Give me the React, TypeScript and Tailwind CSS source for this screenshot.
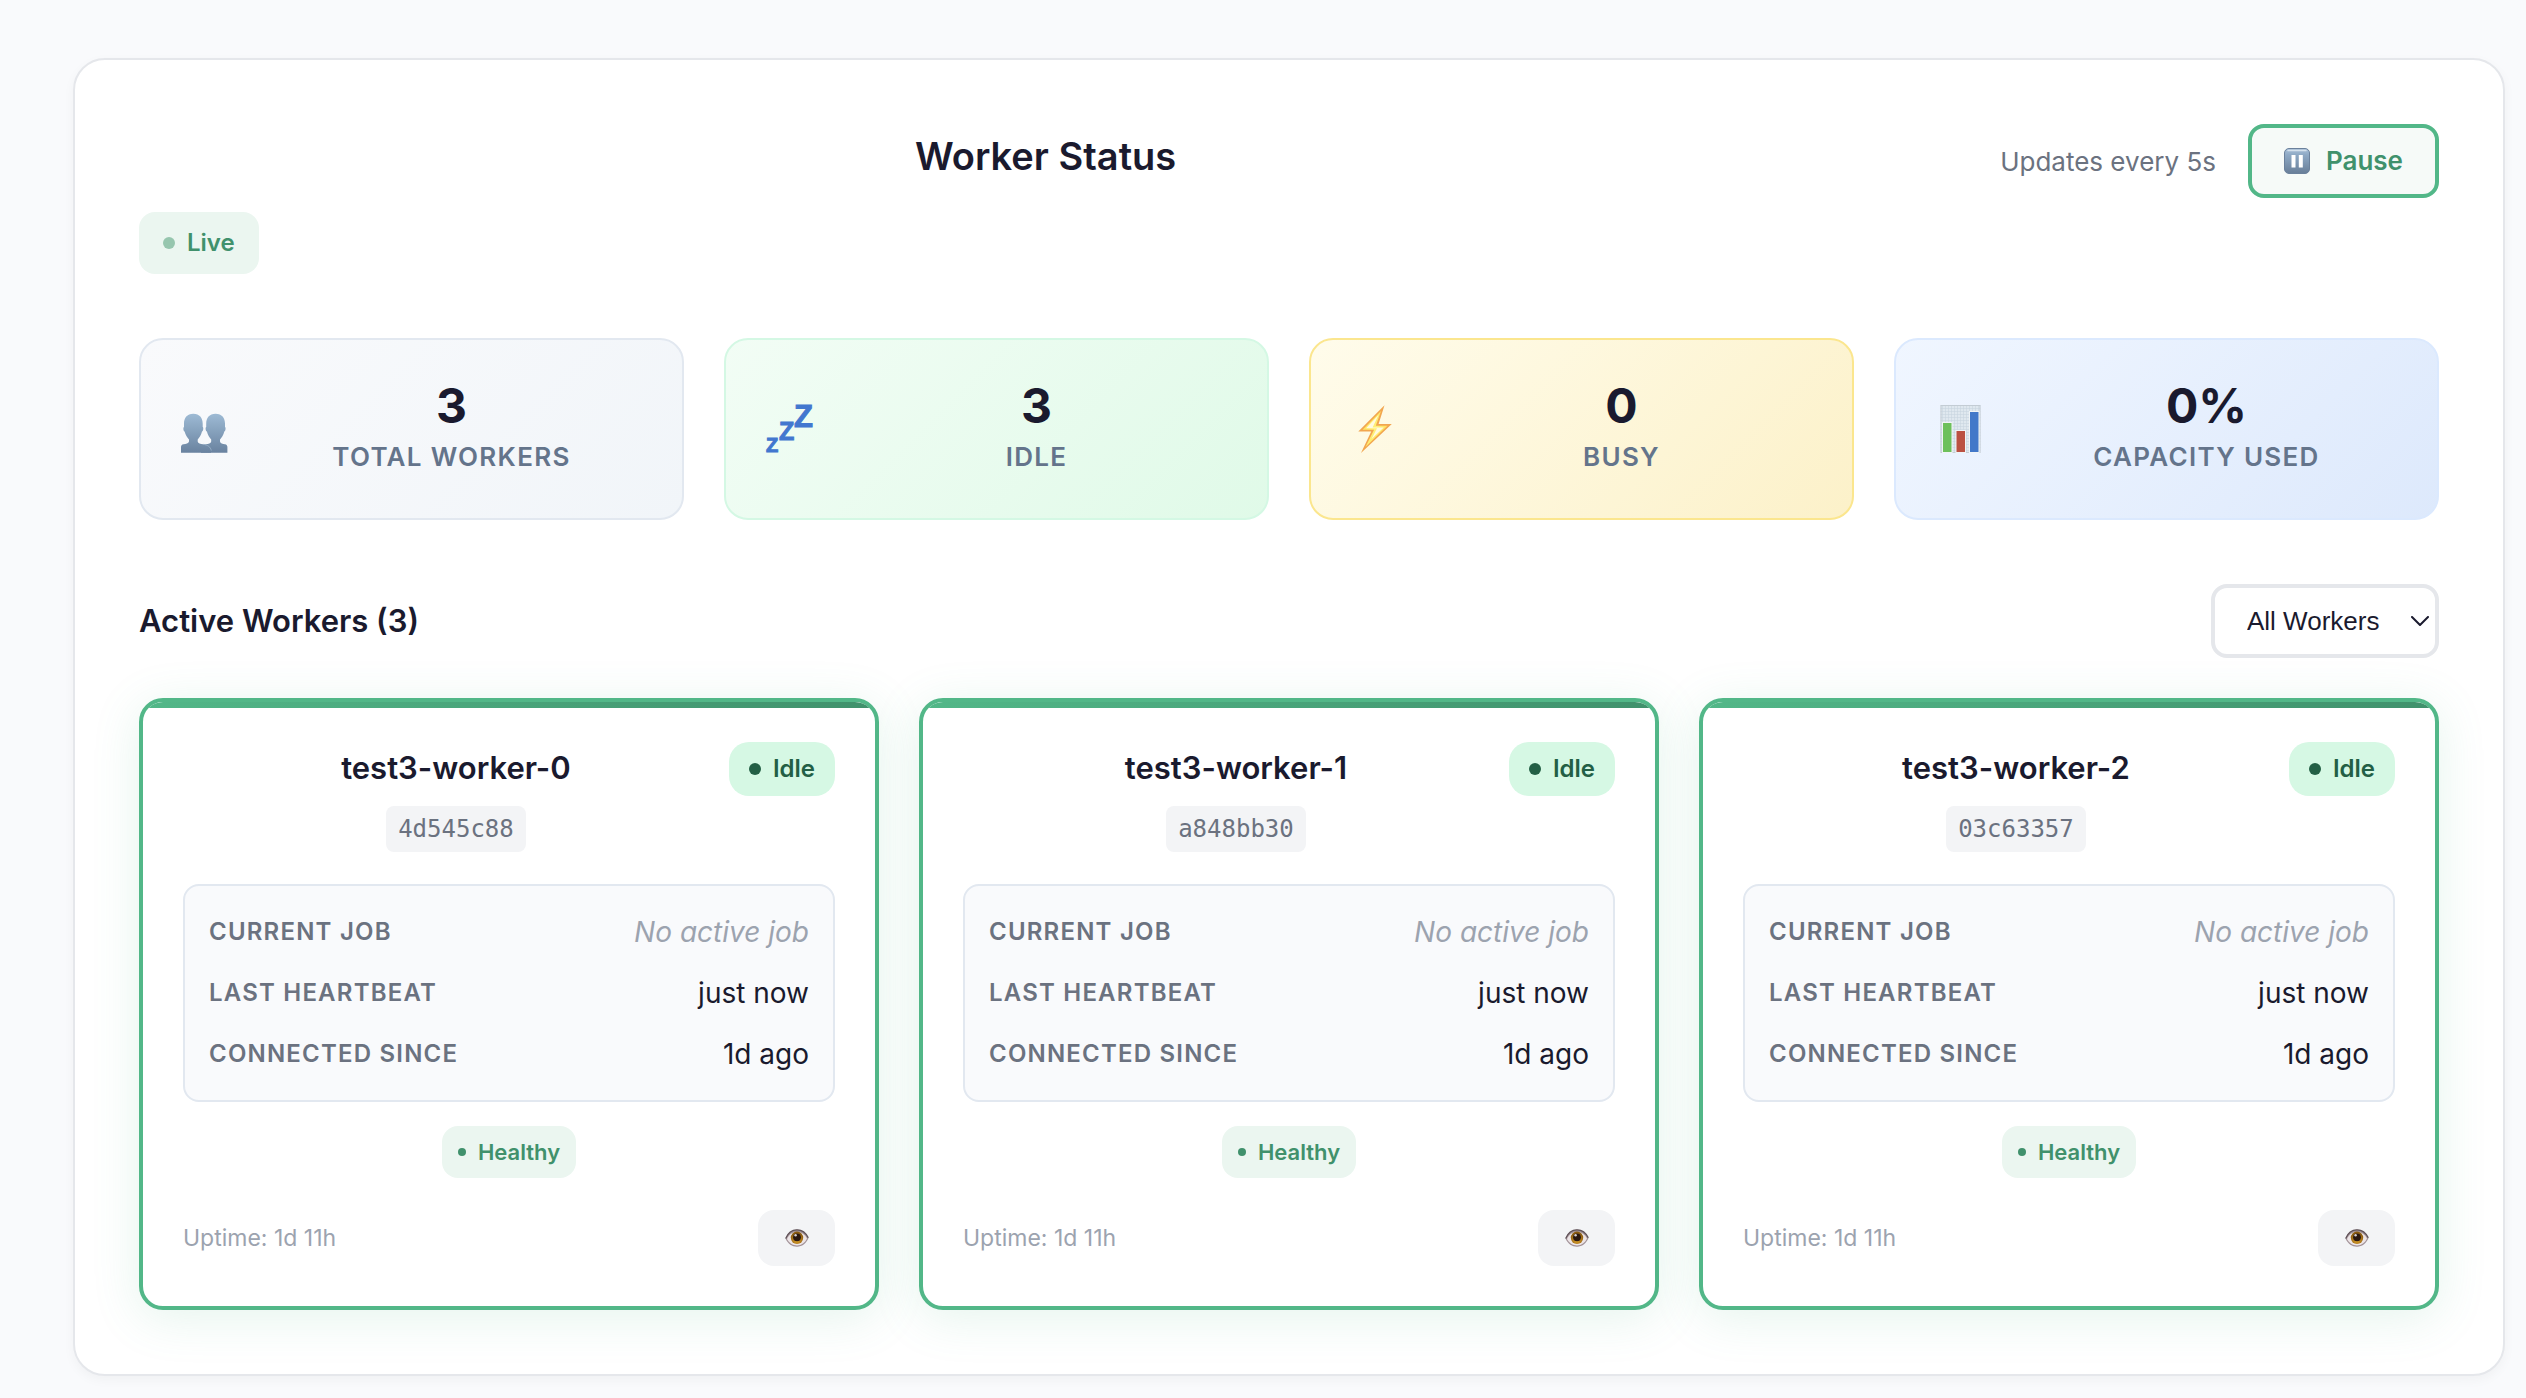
import { useState } from "react";

type Worker = { name: string; id: string };

const workers: Worker[] = [
  { name: "test3-worker-0", id: "4d545c88" },
  { name: "test3-worker-1", id: "a848bb30" },
  { name: "test3-worker-2", id: "03c63357" },
];

function PeopleIcon() {
  return (
    <svg viewBox="0 0 48 48" className="size-12 shrink-0" aria-hidden="true">
      <defs>
        <linearGradient id="people" x1="0" y1="9" x2="0" y2="48" gradientUnits="userSpaceOnUse">
          <stop offset="0" stopColor="#9dbad4" />
          <stop offset="1" stopColor="#69829f" />
        </linearGradient>
      </defs>
      <g fill="url(#people)">
        <path d="M34.600 8.700C28.300 8.700 25.200 13 25.200 18.500V22C24.200 22.500 24.500 26 25.900 26.500C26.700 30 28.700 33 30.200 34.500V36.500C29.900 38.500 27.400 39 24.900 39.300C22 39.600 20 41 20 43V47.700H46.400V42C46.400 40.500 45.600 39.600 44 39.300C41.700 39 39.300 38.500 39 36.500V34.500C40.500 33 42.500 30 43.300 26.500C44.700 26 45 22.500 44 22V18.500C44 13 40.900 8.700 34.600 8.700Z" />
        <path d="M12.300 8.700C6 8.700 3 13 3 18.500V22C2 22.500 2.300 26 3.600 26.500C4.500 30 6.500 33 8 34.500V36.500C7.500 38.500 5 39 2.500 39.300C.8 39.600 0 40.500 0 42V47.700H30C30 43 27 40 22 39.300C19.500 39 17 38.500 16.700 36.500V34.500C18.200 33 20.200 30 21 26.500C22.400 26 22.700 22.500 21.700 22V18.500C21.700 13 18.600 8.700 12.300 8.700Z" />
      </g>
      <path d="M22 39.300C27 40 29.500 42 30.300 45.500" fill="none" stroke="#9db5cb" strokeWidth=".8" />
    </svg>
  );
}

function SleepIcon() {
  return (
    <svg
      viewBox="0 0 48 48"
      className="size-12 shrink-0 overflow-visible font-['Liberation_Sans',sans-serif] font-bold"
      fill="#4277cf"
      stroke="#4277cf"
      strokeWidth="1"
      aria-hidden="true"
    >
      <text x="0" y="47" fontSize="20">Z</text>
      <text x="13" y="35" fontSize="25">Z</text>
      <text x="28" y="22" fontSize="31">Z</text>
    </svg>
  );
}

function BoltIcon() {
  return (
    <svg viewBox="0 0 48 48" className="size-12 shrink-0" aria-hidden="true">
      <defs>
        <linearGradient id="bolt" x1="0" y1="0" x2="1" y2="1">
          <stop offset="0" stopColor="#ffd23c" />
          <stop offset=".5" stopColor="#fff27a" />
          <stop offset="1" stopColor="#ffc53a" />
        </linearGradient>
      </defs>
      <path d="M33.500.3 7.300 26.400h12.900L10 48l30.800-28.900H27.600z" fill="#f2a64f" />
      <path d="M30 6 11.500 24.800h11.600L14.500 42l22-21.300H24.800z" fill="url(#bolt)" />
      <path d="M27.500 10 15 23.200h11L20.500 34l12.300-11.600H21.600z" fill="#fffbe0" />
    </svg>
  );
}

function ChartIcon() {
  return (
    <svg viewBox="0 0 48 48" className="size-12 shrink-0" aria-hidden="true">
      <defs>
        <pattern id="paper" width="3" height="3" patternUnits="userSpaceOnUse">
          <rect width="3" height="3" fill="#dfe8ef" />
          <path d="M0 0H3M0 0V3" stroke="#c6d3de" strokeWidth="1" />
        </pattern>
      </defs>
      <rect x="4.500" y="0" width="40" height="48" fill="url(#paper)" />
      <rect x="5" y=".5" width="39" height="47" fill="none" stroke="#c3ccd4" />
      <rect x="6.500" y="17.500" width="9.500" height="30" fill="#6dc05b" stroke="#f0f4f6" />
      <rect x="20" y="25.500" width="9.500" height="22" fill="#bb5142" stroke="#f0f4f6" />
      <rect x="33.500" y="6.500" width="9.500" height="41" fill="#4278c9" stroke="#f0f4f6" />
    </svg>
  );
}

function PauseIcon() {
  return (
    <svg viewBox="0 0 26 26" className="size-[26px] shrink-0" aria-hidden="true">
      <defs>
        <linearGradient id="pause" x1="0" y1="0" x2="0" y2="1">
          <stop offset="0" stopColor="#a9c0d8" />
          <stop offset=".25" stopColor="#8ea9c5" />
          <stop offset="1" stopColor="#687e98" />
        </linearGradient>
      </defs>
      <rect x=".5" y=".5" width="25" height="25" rx="4.500" fill="url(#pause)" stroke="#6b819c" />
      <path d="M4 2.500h18" stroke="#d3e0ec" strokeWidth="1.500" strokeLinecap="round" />
      <path d="M7.500 7h4v12.500h-4zM14.800 7h4v12.500h-4z" fill="#fff" />
    </svg>
  );
}

function EyeIcon() {
  return (
    <svg viewBox="0 0 24 20" className="h-5 w-6" aria-hidden="true">
      <defs>
        <radialGradient id="iris" cx=".5" cy=".7" r=".6">
          <stop offset="0" stopColor="#e0a52a" />
          <stop offset="1" stopColor="#8a5a10" />
        </radialGradient>
      </defs>
      <path
        d="M.5 10.500C3 4.500 7 1.500 12 1.500s9 3.300 11.500 8.500C21 15.500 17 18.700 12 18.700S3 16 .5 10.500z"
        fill="#a09096"
      />
      <path d="M2 11C4 6.300 7.500 4 12 4s8 2.500 10 6.500c-2 4.300-5.500 6.900-10 6.900S4.200 15 2 11z" fill="#ece4e6" />
      <path d="M.7 10.400C3 4.600 7 1.800 12 1.800s9 3 11.300 8" fill="none" stroke="#5f5258" strokeWidth="1.300" />
      <circle cx="12" cy="9.800" r="6.200" fill="url(#iris)" />
      <circle cx="12" cy="9.300" r="3.900" fill="#2a1710" />
      <circle cx="10.600" cy="7.300" r="1.200" fill="#d8cfd0" />
    </svg>
  );
}

const stats = [
  {
    value: "3",
    label: "Total Workers",
    Icon: PeopleIcon,
    tone: "border-[#e2e8f0] from-[#f9fafc] to-[#f1f5f9]",
  },
  {
    value: "3",
    label: "Idle",
    Icon: SleepIcon,
    tone: "border-[#d4f8e4] from-[#f2fdf5] to-[#e0fae8]",
  },
  {
    value: "0",
    label: "Busy",
    Icon: BoltIcon,
    tone: "border-[#fbe68e] from-[#fffceb] to-[#fcf1c9]",
  },
  {
    value: "0%",
    label: "Capacity Used",
    Icon: ChartIcon,
    tone: "border-[#dbe9fe] from-[#f0f6ff] to-[#dde9fc]",
  },
];

const details = [
  { label: "Current Job", value: "No active job", tone: "italic text-[#9ca3af]" },
  { label: "Last Heartbeat", value: "just now", tone: "text-[#1a1a2e]" },
  { label: "Connected Since", value: "1d ago", tone: "text-[#1a1a2e]" },
];

function WorkerCard({ worker }: { worker: Worker }) {
  return (
    <article className="relative overflow-hidden rounded-3xl border-4 border-[#52b788] bg-white p-10 shadow-[0_8px_48px_rgba(82,183,136,0.15)]">
      <div className="absolute inset-x-0 top-0 h-1.5 bg-linear-to-r from-[#52b788] to-[#40916c]" />
      <header className="flex items-start">
        <div className="flex flex-1 flex-col items-center">
          <h3 className="text-[31px] leading-[52px] font-semibold">{worker.name}</h3>
          <code className="mt-3 rounded-lg bg-[#f3f4f6] px-3 py-1 font-['DejaVu_Sans_Mono',monospace] text-2xl leading-[38px] text-[#6b7280]">
            {worker.id}
          </code>
        </div>
        <span className="flex items-center gap-3 rounded-[20px] bg-[#d6f8e4] px-5 py-2 text-2xl leading-[38px] font-semibold text-[#235f45]">
          <span className="size-3 rounded-full bg-current" />
          Idle
        </span>
      </header>
      <dl className="mt-8 flex flex-col gap-[17px] rounded-2xl border-2 border-[#e2e8f0] bg-[#f9fafc] p-6">
        {details.map((d) => (
          <div key={d.label} className="flex items-center justify-between">
            <dt className="text-2xl leading-[44px] font-semibold tracking-wider text-[#6b7280] uppercase">
              {d.label}
            </dt>
            <dd className={`text-[28px] leading-[44px] ${d.tone}`}>{d.value}</dd>
          </div>
        ))}
      </dl>
      <div className="mt-6 flex justify-center">
        <span className="flex items-center gap-3 rounded-2xl bg-[#ebf6f0] px-4 py-2 text-[22px] leading-9 font-semibold text-[#40916c]">
          <span className="size-2 rounded-full bg-current" />
          Healthy
        </span>
      </div>
      <footer className="mt-8 flex items-center justify-between">
        <span className="text-[23px] leading-9 text-[#9ca3af]">Uptime: 1d 11h</span>
        <button
          type="button"
          aria-label={`View ${worker.name}`}
          className="flex h-14 w-[77px] items-center justify-center rounded-2xl bg-[#f3f4f6]"
        >
          <EyeIcon />
        </button>
      </footer>
    </article>
  );
}

export default function App() {
  const [filter, setFilter] = useState("all");

  return (
    <div className="min-h-screen bg-[#f9fafc] pt-[58px] pr-[21px] pb-5 pl-[73px] font-['Inter',sans-serif] text-[#1a1a2e]">
      <main className="rounded-[32px] border-2 border-[#e5e7eb] bg-white p-16 shadow-[0_4px_12px_rgba(0,0,0,0.04)]">
        <header className="flex items-start gap-12">
          <div className="flex-1">
            <h1 className="text-center text-[38px] leading-[64px] font-semibold">
              Worker Status
            </h1>
            <div className="mt-6 flex">
              <span className="flex items-center gap-3 rounded-2xl bg-[#ebf6f0] px-6 py-3 text-2xl leading-[38px] font-semibold text-[#40916c]">
                <span className="size-3 rounded-full bg-[#96c6ae]" />
                Live
              </span>
            </div>
          </div>
          <div className="flex items-center gap-8">
            <span className="text-[26px] text-[#6b7280]">Updates every 5s</span>
            <button
              type="button"
              className="flex items-center gap-4 rounded-2xl border-4 border-[#52b788] bg-[#f6faf8] px-8 py-3 text-[26px] leading-[42px] font-semibold text-[#40916c]"
            >
              <PauseIcon />
              Pause
            </button>
          </div>
        </header>

        <section className="mt-16 grid grid-cols-4 gap-10">
          {stats.map(({ value, label, Icon, tone }) => (
            <div
              key={label}
              className={`flex items-center gap-8 rounded-3xl border-2 bg-linear-135 px-10 py-9 ${tone}`}
            >
              <Icon />
              <div className="flex-1 pb-1 text-center">
                <div className="text-5xl leading-[60px] font-bold">{value}</div>
                <div className="text-[26px] leading-[42px] font-semibold tracking-wider text-[#64748b] uppercase">
                  {label}
                </div>
              </div>
            </div>
          ))}
        </section>

        <section className="mt-16">
          <div className="flex items-center justify-between">
            <h2 className="text-[31px] leading-[52px] font-semibold">Active Workers (3)</h2>
            <div className="relative">
              <select
                aria-label="Filter workers"
                value={filter}
                onChange={(e) => setFilter(e.target.value)}
                className="h-[74px] w-[228px] appearance-none rounded-2xl border-4 border-[#e5e7eb] bg-white px-8 font-['Liberation_Sans',sans-serif] text-[26px]"
              >
                <option value="all">All Workers</option>
                <option value="idle">Idle</option>
                <option value="busy">Busy</option>
              </select>
              <svg
                viewBox="0 0 18 10"
                className="pointer-events-none absolute top-8 right-2.5 h-2.5 w-[18px]"
                fill="none"
                stroke="#1a1a2e"
                strokeWidth="2"
                strokeLinecap="round"
                strokeLinejoin="round"
                aria-hidden="true"
              >
                <path d="M1 1l8 8 8-8" />
              </svg>
            </div>
          </div>
          <div className="mt-10 grid grid-cols-3 gap-10">
            {workers.map((w) => (
              <WorkerCard key={w.id} worker={w} />
            ))}
          </div>
        </section>
      </main>
    </div>
  );
}
